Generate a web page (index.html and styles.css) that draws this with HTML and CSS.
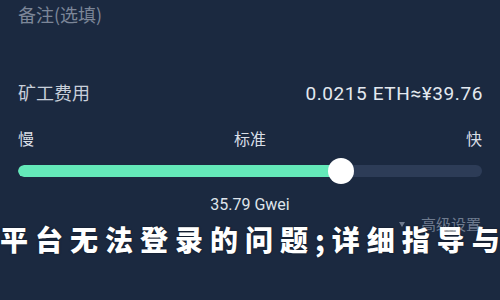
FILE: index.html
```html
<!DOCTYPE html>
<html lang="zh-CN">
<head>
<meta charset="utf-8">
<title>矿工费用</title>
<link rel="stylesheet" href="styles.css">
</head>
<body>
<div class="screen">
  <div class="remark">备注(选填)</div>
  <div class="fee-row">
    <span class="fee-label">矿工费用</span>
    <span class="fee-value">0.0215 ETH≈¥39.76</span>
  </div>
  <div class="speed-labels">
    <span>慢</span>
    <span>标准</span>
    <span>快</span>
  </div>
  <div class="slider">
    <div class="track"><div class="fill" style="width:69.7%"></div></div>
    <div class="thumb" style="left:69.7%"></div>
  </div>
  <div class="gwei">35.79 Gwei</div>
  <div class="advanced"><span class="caret"></span><span>高级设置</span></div>
  <div class="banner">平台无法登录的问题;详细指导与</div>
</div>
</body>
</html>
```

FILE: styles.css
```css
html, body {
  margin: 0;
  padding: 0;
  background: #1b2940;
  overflow: hidden;
}
.screen {
  position: relative;
  width: 500px;
  height: 300px;
  box-sizing: border-box;
  padding: 2px 18px 0 18px;
  font-family: "Noto Sans CJK SC", Roboto, sans-serif;
  overflow: hidden;
}
.remark {
  font-size: 18px;
  line-height: 24px;
  color: #7c8698;
}
.fee-row {
  margin-top: 54px;
  display: flex;
  justify-content: space-between;
  align-items: baseline;
  line-height: 24px;
}
.fee-label {
  font-size: 18px;
  color: #c8cfda;
}
.fee-value {
  font-family: Roboto, "Noto Sans CJK SC", sans-serif;
  font-size: 19px;
  letter-spacing: 0.6px;
  color: #e4e9f0;
  margin-right: -1px;
}
.speed-labels {
  margin-top: 21px;
  display: flex;
  justify-content: space-between;
  font-size: 16px;
  line-height: 22px;
  color: #d9dee6;
}
.slider {
  position: relative;
  margin-top: 8px;
  height: 28px;
  display: flex;
  align-items: center;
}
.track {
  flex: 1;
  height: 12px;
  border-radius: 6px;
  background: #2d3c57;
  overflow: hidden;
}
.fill {
  height: 100%;
  background: #64e9b9;
  border-radius: 6px 0 0 6px;
}
.thumb {
  position: absolute;
  top: 1px;
  width: 26px;
  height: 26px;
  margin-left: -13px;
  border-radius: 50%;
  background: #ffffff;
}
.gwei {
  margin-top: 12px;
  text-align: center;
  font-family: Roboto, sans-serif;
  font-size: 16px;
  line-height: 16px;
  color: #dfe4eb;
}
.advanced {
  margin-top: 3px;
  display: flex;
  justify-content: flex-end;
  align-items: center;
  gap: 16px;
  padding-right: 1px;
  font-size: 15px;
  line-height: 16px;
  color: #6f7b8f;
}
.caret {
  width: 0;
  height: 0;
  border-left: 3px solid transparent;
  border-right: 3px solid transparent;
  border-top: 5px solid #6f7b8f;
}
.banner {
  position: absolute;
  left: 0;
  top: 225px;
  white-space: nowrap;
  font-family: "Noto Sans CJK SC", sans-serif;
  font-weight: 900;
  font-size: 28px;
  line-height: 28px;
  letter-spacing: 7px;
  color: #ffffff;
  text-shadow: 0 0 2px rgba(0, 0, 0, 0.6);
}
```
